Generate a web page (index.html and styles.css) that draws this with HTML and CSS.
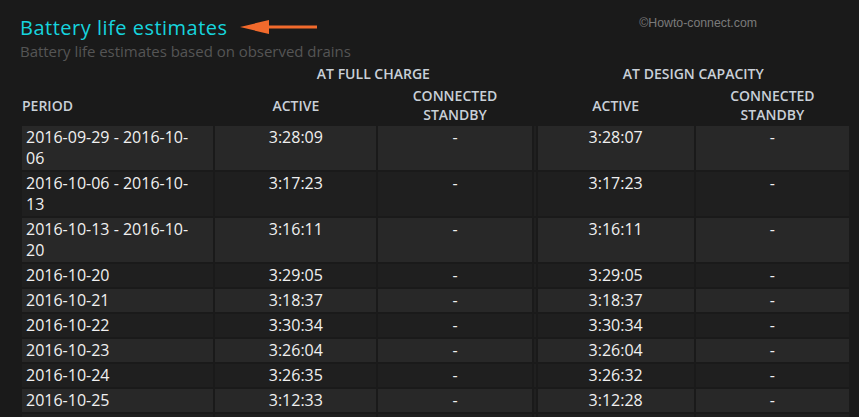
FILE: index.html
```html
<!DOCTYPE html>
<html>
<head>
<meta charset="utf-8">
<link rel="stylesheet" href="styles.css">
</head>
<body>
<div class="page">
  <div class="title-row">
    <h1 class="title">Battery life estimates</h1>
    <svg class="arrow" width="78" height="16" viewBox="0 0 78 16"><polygon points="0,8 29,1 29,15" fill="#f26a2c"/><rect x="27" y="6.5" width="50" height="3" fill="#f26a2c"/></svg>
    <span class="watermark">©Howto-connect.com</span>
  </div>
  <div class="subtitle">Battery life estimates based on observed drains</div>
  <table class="grid">
    <colgroup>
      <col class="c-period"><col class="c-act1"><col class="c-cs1"><col class="c-sep"><col class="c-act2"><col class="c-cs2">
    </colgroup>
    <thead>
      <tr class="group-row"><th></th><th colspan="2">AT FULL CHARGE</th><th></th><th colspan="2">AT DESIGN CAPACITY</th></tr>
      <tr class="head-row"><th class="left">PERIOD</th><th>ACTIVE</th><th>CONNECTED<br>STANDBY</th><th></th><th>ACTIVE</th><th>CONNECTED<br>STANDBY</th></tr>
    </thead>
    <tbody>
      <tr class="odd"><td class="period">2016-09-29 - 2016-10-06</td><td>3:28:09</td><td>-</td><td class="sep"></td><td>3:28:07</td><td>-</td></tr>
      <tr class="even"><td class="period">2016-10-06 - 2016-10-13</td><td>3:17:23</td><td>-</td><td class="sep"></td><td>3:17:23</td><td>-</td></tr>
      <tr class="odd"><td class="period">2016-10-13 - 2016-10-20</td><td>3:16:11</td><td>-</td><td class="sep"></td><td>3:16:11</td><td>-</td></tr>
      <tr class="even"><td class="period">2016-10-20</td><td>3:29:05</td><td>-</td><td class="sep"></td><td>3:29:05</td><td>-</td></tr>
      <tr class="odd"><td class="period">2016-10-21</td><td>3:18:37</td><td>-</td><td class="sep"></td><td>3:18:37</td><td>-</td></tr>
      <tr class="even"><td class="period">2016-10-22</td><td>3:30:34</td><td>-</td><td class="sep"></td><td>3:30:34</td><td>-</td></tr>
      <tr class="odd"><td class="period">2016-10-23</td><td>3:26:04</td><td>-</td><td class="sep"></td><td>3:26:04</td><td>-</td></tr>
      <tr class="even"><td class="period">2016-10-24</td><td>3:26:35</td><td>-</td><td class="sep"></td><td>3:26:32</td><td>-</td></tr>
      <tr class="odd"><td class="period">2016-10-25</td><td>3:12:33</td><td>-</td><td class="sep"></td><td>3:12:28</td><td>-</td></tr>
      <tr class="even empty"><td></td><td></td><td></td><td class="sep"></td><td></td><td></td></tr>
    </tbody>
  </table>
</div>
</body>
</html>
```
FILE: styles.css
```css
html, body {
  margin: 0;
  padding: 0;
  background: #ffffff;
}
.page {
  height: 417px;
  overflow: hidden;
  background: #1a1a1a;
  padding: 0 0 0 20px;
  box-sizing: border-box;
  font-family: "Open Sans", "Noto Sans", sans-serif;
  color: #eeeeee;
}
.title-row {
  display: flex;
  align-items: center;
  padding-top: 15px;
  height: 26px;
}
.title {
  margin: 0;
  font-family: "Open Sans", sans-serif;
  font-weight: 400;
  font-size: 20px;
  line-height: 26px;
  color: #16d4de;
  letter-spacing: 0.5px;
}
.arrow {
  margin-left: 12px;
  margin-top: -2px;
}
.watermark {
  margin-left: auto;
  margin-right: 102px;
  margin-top: -10px;
  font-family: "Liberation Sans", Arial, sans-serif;
  font-size: 12.3px;
  color: #7a7a7a;
}
.subtitle {
  font-size: 15px;
  line-height: 20px;
  color: #555555;
  letter-spacing: -0.03px;
}
.grid {
  margin-top: 0;
  border-collapse: separate;
  border-spacing: 2px;
  table-layout: fixed;
  width: 831px;
}
.c-period { width: 191px; }
.c-act1 { width: 161px; }
.c-cs1 { width: 153px; }
.c-sep { width: 2px; }
.c-act2 { width: 156px; }
.c-cs2 { width: 153px; }
th {
  font-weight: 600;
  font-size: 14px;
  line-height: 19px;
  color: #c9d0d8;
  text-align: center;
  padding: 0;
}
th.left {
  text-align: left;
  padding-left: 4px;
}
.group-row th {
  height: 21px;
  vertical-align: middle;
}
.head-row th {
  height: 36px;
  padding: 0;
  vertical-align: middle;
}
td {
  font-size: 16px;
  line-height: 21px;
  padding: 1px 5px 1px 5px;
  text-align: center;
  vertical-align: top;
  color: #f0f0f0;
}
tr.empty td {
  height: 21px;
}
td.period {
  text-align: left;
  padding-left: 4px;
  padding-right: 14px;
}
td.sep {
  padding: 0;
  background: #202020 !important;
}
tr.odd td { background: #282828; }
tr.even td { background: #1f1f1f; }
```
